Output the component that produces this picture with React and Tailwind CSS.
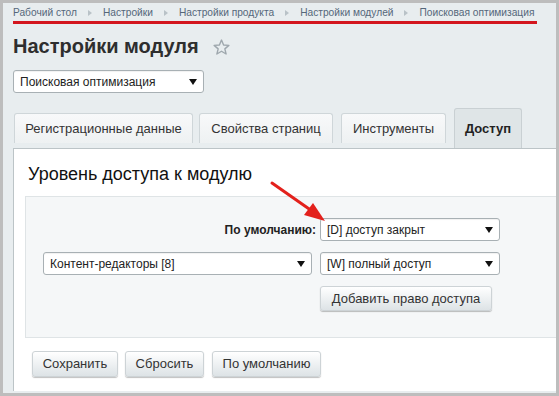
import React from "react";

const Arrow = () => (
  <svg width="8" height="6" viewBox="0 0 8 6" className="shrink-0">
    <path d="M0 0 L8 0 L4 6 Z" fill="#111" />
  </svg>
);

const Select = ({ text, className }) => (
  <div
    className={`flex items-center justify-between rounded-[3px] border border-[#a8b0b4] bg-white pl-[6px] pr-[6px] text-[12px] text-[#222] shadow-[inset_0_1px_1px_rgba(0,0,0,0.06)] ${className}`}
  >
    <span>{text}</span>
    <Arrow />
  </div>
);

const Btn = ({ children, className }) => (
  <div
    className={`flex items-center justify-center rounded-[3px] border border-[#cdd3d6] bg-gradient-to-b from-[#ffffff] to-[#dde3e6] text-[13px] text-[#333] shadow-[0_1px_1px_rgba(0,0,0,0.25)] ${className}`}
  >
    {children}
  </div>
);

const Sep = () => (
  <svg width="4" height="6" viewBox="0 0 4 6" className="mx-[11px] shrink-0">
    <path d="M0 0 L4 3 L0 6 Z" fill="#b9c2c7" />
  </svg>
);

export default function App() {
  return (
    <div className="relative h-[396px] w-[559px] overflow-hidden border-[3px] border-[#bdbdbd] bg-[#e8edef] font-['Liberation_Sans',Arial,sans-serif]">
      <div className="pl-[10px] pt-[3px]">
        <div className="flex h-[14px] items-center text-[10.2px] leading-[14px] text-[#55677a]">
          <span>Рабочий стол</span>
          <Sep />
          <span>Настройки</span>
          <Sep />
          <span>Настройки продукта</span>
          <Sep />
          <span>Настройки модулей</span>
          <Sep />
          <span>Поисковая оптимизация</span>
        </div>
        <div className="mt-[1px] h-[3px] w-[524px] bg-[#d3161e]" />
        <div className="mt-[10px] flex h-[24px] items-center">
          <span className="text-[20px] font-bold leading-[24px] text-[#2e2e2e]">
            Настройки модуля
          </span>
          <svg width="17" height="16" viewBox="0 0 24 23" className="ml-[14px] mt-[2px]">
            <path
              d="M12 1.5 L15 8.6 L22.6 9.2 L16.8 14.2 L18.6 21.6 L12 17.6 L5.4 21.6 L7.2 14.2 L1.4 9.2 L9 8.6 Z"
              fill="none"
              stroke="#9ea7ad"
              strokeWidth="2"
              strokeLinejoin="round"
            />
          </svg>
        </div>
        <Select text="Поисковая оптимизация" className="mt-[12px] h-[23px] w-[191px]" />
        <div className="mt-[15px] flex h-[40px] items-start pl-[1px]">
          <div className="mt-[5px] flex h-[30px] w-[179px] items-center justify-center rounded-t-[3px] border border-b-0 border-[#cfd6d9] bg-gradient-to-b from-[#f8f9fa] to-[#eef1f2] text-[13px] text-[#333]">
            Регистрационные данные
          </div>
          <div className="ml-[6px] mt-[5px] flex h-[30px] w-[134px] items-center justify-center rounded-t-[3px] border border-b-0 border-[#cfd6d9] bg-gradient-to-b from-[#f8f9fa] to-[#eef1f2] text-[13px] text-[#333]">
            Свойства страниц
          </div>
          <div className="ml-[8px] mt-[5px] flex h-[30px] w-[105px] items-center justify-center rounded-t-[3px] border border-b-0 border-[#cfd6d9] bg-gradient-to-b from-[#f8f9fa] to-[#eef1f2] text-[13px] text-[#333]">
            Инструменты
          </div>
          <div className="ml-[8px] flex h-[40px] w-[68px] justify-center rounded-t-[3px] border border-b-0 border-[#c9d0d3] bg-[#dfe5e7] pt-[10px] text-[13px] font-bold text-[#222]">
            Доступ
          </div>
        </div>
        <div className="h-[243px] border-l border-t border-[#bcc4c7] bg-white">
          <div className="pl-[14px] pt-[14px] text-[18px] leading-[22px] text-[#111]">
            Уровень доступа к модулю
          </div>
          <div className="ml-[11px] mt-[11px] h-[142px] border-b border-l border-t border-[#dfe4e6] bg-[#f5f7f8] pl-[17px] pt-[21px]">
            <div className="grid grid-cols-[269px_180px] gap-x-[8px] gap-y-[11px]">
              <div className="flex h-[23px] items-center justify-end text-[12px] font-bold text-[#222]">
                <span className="mr-[-4px]">По умолчанию:</span>
              </div>
              <Select text="[D] доступ закрыт" className="h-[23px]" />
              <Select text="Контент-редакторы [8]" className="h-[23px]" />
              <Select text="[W] полный доступ" className="h-[23px]" />
              <div />
              <Btn className="h-[25px] w-[172px]">Добавить право доступа</Btn>
            </div>
          </div>
          <div className="ml-[18px] mt-[13px] flex gap-[7px]">
            <Btn className="h-[26px] w-[86px]">Сохранить</Btn>
            <Btn className="h-[26px] w-[79px]">Сбросить</Btn>
            <Btn className="ml-[1px] h-[26px] w-[109px]">По умолчанию</Btn>
          </div>
        </div>
      </div>
      <svg
        className="pointer-events-none absolute left-0 top-0"
        width="559"
        height="396"
        viewBox="-3 -3 559 396"
      >
        <line x1="266" y1="177" x2="306" y2="205" stroke="#e3211c" strokeWidth="3" strokeLinecap="round" />
        <path d="M319 215 L298 209 L307 197 Z" fill="#e3211c" />
      </svg>
    </div>
  );
}
